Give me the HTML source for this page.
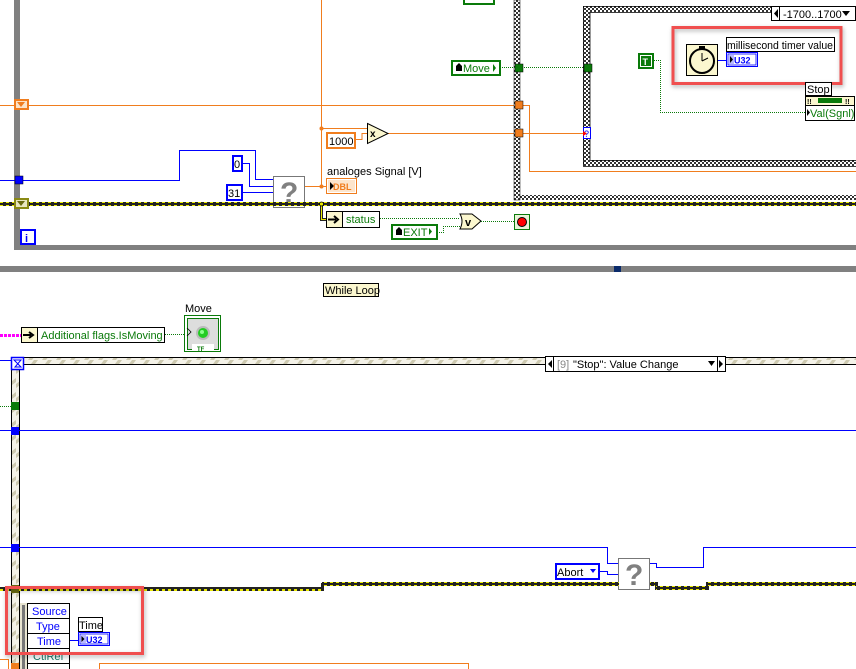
<!DOCTYPE html>
<html><head><meta charset="utf-8"><style>
html,body{margin:0;padding:0;background:#fff;width:856px;height:669px;overflow:hidden}
</style></head><body>
<svg width="856" height="669" viewBox="0 0 856 669" xmlns="http://www.w3.org/2000/svg" font-family="Liberation Sans, sans-serif" font-size="11">
<defs>
<pattern id="chk" width="4" height="4" patternUnits="userSpaceOnUse"><rect width="4" height="4" fill="#fff"/><rect width="2" height="2" fill="#333"/><rect x="2" y="2" width="2" height="2" fill="#333"/></pattern>
<pattern id="err" width="6" height="4" patternUnits="userSpaceOnUse"><rect width="6" height="4" fill="#222"/><rect x="0" y="1" width="3" height="2" fill="#e8e800"/></pattern>
<pattern id="strH" width="14" height="8" patternUnits="userSpaceOnUse"><rect width="14" height="8" fill="#f4f2e8"/><path d="M0 8 L6 0 L10 0 L4 8Z" fill="#cdc9b0"/></pattern>
<pattern id="strV" width="8" height="14" patternUnits="userSpaceOnUse"><rect width="8" height="14" fill="#f4f2e8"/><path d="M0 6 L8 0 L8 4 L0 10Z" fill="#cdc9b0"/></pattern>
<filter id="sh" x="-10%" y="-10%" width="120%" height="130%"><feDropShadow dx="1" dy="2" stdDeviation="2" flood-color="#000" flood-opacity="0.3"/></filter>
</defs>

<rect x="14" y="0" width="6" height="250" fill="#808080"/>
<rect x="14" y="245" width="842" height="5" fill="#808080"/>
<rect x="0" y="266" width="856" height="6" fill="#808080"/>
<rect x="614" y="266" width="7" height="6" fill="#0a2a6a"/>

<line x1="0" y1="105.5" x2="515" y2="105.5" stroke="#f07d1e" stroke-width="1"/>
<line x1="321.5" y1="0" x2="321.5" y2="187" stroke="#f07d1e"/>
<path d="M321 128.5 H367" stroke="#f07d1e" fill="none"/>
<path d="M356 139.5 H362 V133.5 H367" stroke="#f07d1e" fill="none"/>
<path d="M388 133.5 H515" stroke="#f07d1e" fill="none"/>
<circle cx="321.5" cy="128.5" r="2" fill="#f07d1e"/>
<path d="M304 186.5 H326" stroke="#f07d1e" fill="none"/>
<circle cx="321.5" cy="186.5" r="2" fill="#f07d1e"/>
<path d="M520 105.5 H529.5 V171.5 H856" stroke="#f07d1e" fill="none"/>
<path d="M520 133.5 H584" stroke="#f07d1e" fill="none"/>

<rect x="14" y="99" width="15" height="11" fill="#f07d1e"/>
<rect x="16" y="101" width="11" height="7" fill="#fbe3c8"/>
<path d="M17 102 H25 L21 107Z" fill="#f07d1e"/>

<path d="M367.5 123.5 L388 133.5 L367.5 143.5Z" fill="#fbf7cf" stroke="#000"/>
<text x="370" y="137" font-size="10" font-weight="bold">x</text>
<rect x="327" y="133" width="28" height="15" fill="#fff" stroke="#f07d1e" stroke-width="2"/>
<text x="329" y="145">1000</text>

<path d="M0 180.5 H179.5 V150.5 H255.5 V179.5 H273" stroke="#0000ff" fill="none"/>
<path d="M242 163.5 H249.5 V186.5 H273" stroke="#0000ff" fill="none"/>
<path d="M242 192.5 H273" stroke="#0000ff" fill="none"/>
<rect x="15" y="176" width="8" height="8" fill="#0000ff" stroke="#000" stroke-width="0.5"/>
<rect x="233" y="156" width="9" height="15" fill="#fff" stroke="#0000ff" stroke-width="2"/>
<text x="234" y="168">0</text>
<rect x="227" y="185" width="15" height="15" fill="#fff" stroke="#0000ff" stroke-width="2"/>
<text x="228" y="197">31</text>

<rect x="273.5" y="176.5" width="31" height="31" fill="#fff" stroke="#777"/>
<text x="280" y="203" font-size="30" font-weight="bold" fill="#808080">?</text>

<text x="327" y="175">analoges Signal [V]</text>
<rect x="326.5" y="178.5" width="30" height="15" fill="#fff" stroke="#f07d1e"/>
<rect x="328" y="180" width="27" height="12" fill="#fde5cc"/>
<path d="M330 182 L334 186 L330 190Z" fill="#000"/>
<text x="333" y="190" font-size="9" font-weight="bold" fill="#f07d1e">DBL</text>

<rect x="0" y="202" width="856" height="4" fill="url(#err)"/>
<rect x="14" y="198" width="15" height="11" fill="#8a8a14"/>
<rect x="16" y="200" width="11" height="7" fill="#e8e6c0"/>
<path d="M17 201 H25 L21 206Z" fill="#6a6a10"/>
<path d="M321.5 204 V219.5 H327" stroke="#222" stroke-width="3" fill="none"/>
<path d="M321.5 204 V219.5 H327" stroke="#e8e800" stroke-width="1" fill="none"/>
<circle cx="321.5" cy="204" r="2" fill="#e8e800" stroke="#000" stroke-width="0.8"/>

<rect x="326.5" y="211.5" width="16" height="16" fill="#fbf7cf" stroke="#000"/>
<path d="M328 219.5 H336 M334 216 L338 219.5 L334 223" stroke="#000" stroke-width="2" fill="none"/>
<rect x="342.5" y="211.5" width="37" height="16" fill="#fff" stroke="#000"/>
<text x="346" y="223" fill="#0a7a0a">status</text>
<path d="M380 218.5 H460" stroke="#0a7a0a" stroke-dasharray="1,1" fill="none"/>
<rect x="392" y="225" width="45" height="14" fill="#fff" stroke="#0a7a0a" stroke-width="2"/>
<path d="M396 230 L399 227 L402 230 V235 H396Z" fill="#000"/>
<text x="403" y="236" fill="#0a7a0a">EXIT</text>
<path d="M429 228 L432 231.5 L429 235Z" fill="#0a7a0a"/>
<path d="M437 232.5 H443.5 V226.5 H462" stroke="#0a7a0a" stroke-dasharray="1,1" fill="none"/>
<path d="M460 214 H472 L481 221 L472 229 H460 Q464 221 460 214Z" fill="#fbf7cf" stroke="#000"/>
<text x="465" y="226" font-size="11" font-weight="bold">v</text>
<path d="M481 221.5 H514" stroke="#0a7a0a" stroke-dasharray="1,1" fill="none"/>
<rect x="514.5" y="214.5" width="15" height="15" fill="#e9f3d8" stroke="#0a7a0a"/>
<circle cx="522" cy="222" r="4.5" fill="#ff0000" stroke="#000" stroke-width="1"/>

<rect x="21" y="230" width="14" height="14" fill="#fff" stroke="#0000ff" stroke-width="2"/>
<text x="25" y="242" fill="#0000ff" font-weight="bold">i</text>

<rect x="514" y="0" width="6" height="200" fill="url(#chk)"/>
<rect x="514" y="195" width="342" height="5" fill="url(#chk)"/>
<rect x="514" y="0" width="6" height="200" fill="none" stroke="#000" stroke-width="0.5"/>
<rect x="464" y="-2" width="30" height="6" fill="#fff" stroke="#0a7a0a" stroke-width="2"/>

<rect x="452" y="61" width="48" height="14" fill="#fff" stroke="#0a7a0a" stroke-width="2"/>
<path d="M456 66 L459 63 L462 66 V71 H456Z" fill="#000"/>
<text x="463" y="72" fill="#0a7a0a">Move</text>
<path d="M493 64 L496 68 L493 72Z" fill="#0a7a0a"/>
<path d="M500 67.5 H584" stroke="#0a7a0a" stroke-dasharray="1,1" fill="none"/>
<rect x="515" y="64" width="8" height="8" fill="#0a7a0a" stroke="#000" stroke-width="0.5"/>
<rect x="515" y="101" width="8" height="8" fill="#f07d1e" stroke="#000" stroke-width="0.5"/>
<rect x="515" y="129" width="8" height="8" fill="#f07d1e" stroke="#000" stroke-width="0.5"/>

<rect x="583" y="6" width="7" height="160" fill="url(#chk)"/>
<rect x="583" y="6" width="273" height="6" fill="url(#chk)"/>
<rect x="583" y="160" width="273" height="6" fill="url(#chk)"/>
<path d="M583.5 166 V6.5 H856 M590 160 V12.5 H856 M590 160.5 H856 M583 166.5 H856" stroke="#000" fill="none" stroke-width="0.8"/>
<rect x="584" y="64" width="8" height="8" fill="#0a7a0a" stroke="#000" stroke-width="0.5"/>
<rect x="583.5" y="127.5" width="7" height="11" fill="#fff" stroke="#0000ff"/>
<text x="584" y="137" font-size="9" fill="#0000ff">?</text>
<path d="M583 131 L587 133.5 L583 136Z" fill="#ff0000"/>
<rect x="771.5" y="6.5" width="84" height="14" fill="#fff" stroke="#000"/>
<line x1="779.5" y1="6.5" x2="779.5" y2="20.5" stroke="#000"/>
<path d="M778 9 L774 13.5 L778 18Z" fill="#000"/>
<text x="783" y="18">-1700..1700</text>
<path d="M842 11 H850 L846 16Z" fill="#000"/>

<rect x="639" y="54" width="14" height="14" fill="#fff" stroke="#0a7a0a" stroke-width="2"/>
<rect x="641" y="56" width="10" height="10" fill="#0a7a0a"/>
<text x="642.5" y="65" font-size="9" font-weight="bold" fill="#fff">T</text>
<path d="M654 60.5 H660.5 V112.5 H806" stroke="#0a7a0a" stroke-dasharray="1,1" fill="none"/>

<rect x="673" y="27.5" width="168" height="56" fill="none" stroke="#f05050" stroke-width="3" filter="url(#sh)"/>
<rect x="686.5" y="44.5" width="31" height="31" fill="#fbf7cf" stroke="#000"/>
<circle cx="702" cy="61" r="12" fill="#fbf7cf" stroke="#000" stroke-width="2"/>
<rect x="699" y="46" width="6" height="3" fill="#000"/>
<path d="M702 61 V53 M702 61 L708 58" stroke="#000" stroke-width="1" fill="none"/>
<path d="M718 60.5 H727" stroke="#0000ff" fill="none"/>
<rect x="726.5" y="37.5" width="108" height="14" fill="#fff" stroke="#000"/>
<text x="727" y="49" textLength="106" lengthAdjust="spacingAndGlyphs">millisecond timer value</text>
<rect x="726.5" y="52.5" width="31" height="14" fill="#fff" stroke="#0000ff"/>
<rect x="728" y="54" width="28" height="11" fill="#fff" stroke="#0000ff" stroke-width="0.8"/>
<rect x="729" y="55" width="5" height="9" fill="#b8b8ff"/>
<path d="M730 56 L733 59.5 L730 63Z" fill="#000"/>
<text x="734" y="63.5" font-size="9" font-weight="bold" fill="#0000ff">U32</text>

<rect x="805.5" y="82.5" width="26" height="13" fill="#fff" stroke="#000"/>
<text x="807" y="93">Stop</text>
<rect x="805.5" y="96.5" width="49" height="24" fill="#fff" stroke="#000"/>
<rect x="806" y="97" width="48" height="8" fill="#fbf7cf"/>
<rect x="818" y="98" width="24" height="5" fill="#0a7a0a"/>
<text x="807" y="104" font-size="7" font-weight="bold">!!</text>
<text x="845" y="104" font-size="7" font-weight="bold">!!</text>
<line x1="806" y1="105.5" x2="854" y2="105.5" stroke="#000"/>
<path d="M807 109 L810 112.5 L807 116Z" fill="#000"/>
<text x="810" y="117" fill="#0a7a0a">Val(Sgnl)</text>

<rect x="323.5" y="283.5" width="55" height="13" fill="#fbf7cf" stroke="#000"/>
<text x="325" y="294">While Loop</text>

<text x="185" y="312">Move</text>
<rect x="184.5" y="315.5" width="36" height="36" fill="#fff" stroke="#0a7a0a"/>
<rect x="187.5" y="318.5" width="31" height="31" fill="#ddd" stroke="#0a7a0a"/>
<circle cx="203" cy="333" r="7" fill="#bbb"/>
<circle cx="203" cy="333" r="5" fill="#22cc22"/>
<circle cx="202" cy="332" r="2" fill="#88ff88"/>
<rect x="192" y="344" width="22" height="6" fill="#fff"/>
<text x="197" y="351" font-size="6" fill="#0a7a0a" font-weight="bold">TF</text>
<path d="M187 328 L191 332 L187 336" stroke="#000" fill="none" stroke-width="0.8"/>

<path d="M0 335.5 H21" stroke="#ff00ff" stroke-width="3" stroke-dasharray="3,1" fill="none"/>
<rect x="21.5" y="327.5" width="16" height="15" fill="#fbf7cf" stroke="#000"/>
<path d="M23 335 H31 M29 332 L33 335 L29 338" stroke="#000" stroke-width="2" fill="none"/>
<rect x="37.5" y="327.5" width="127" height="15" fill="#fff" stroke="#000"/>
<text x="41" y="339" fill="#0a7a0a">Additional flags.IsMoving</text>
<path d="M165 334.5 H184" stroke="#0a7a0a" stroke-dasharray="1,1" fill="none"/>

<rect x="11" y="357" width="845" height="8" fill="url(#strH)"/>
<path d="M11 357.5 H856 M19 364.5 H856" stroke="#000" fill="none"/>
<rect x="11" y="365" width="8" height="304" fill="url(#strV)"/>
<path d="M11.5 357 V669 M19.5 365 V669" stroke="#000" fill="none"/>
<path d="M0 360.5 H11" stroke="#0000ff" fill="none"/>
<rect x="11.5" y="357.5" width="12" height="12" fill="#fff" stroke="#0000ff" stroke-width="1.5"/>
<path d="M14 360 H21 L15 367 H21Z" stroke="#0000ff" fill="none"/>
<rect x="545.5" y="356.5" width="180" height="15" fill="#fff" stroke="#000"/>
<line x1="553.5" y1="356.5" x2="553.5" y2="371.5" stroke="#000"/>
<line x1="717.5" y1="356.5" x2="717.5" y2="371.5" stroke="#000"/>
<path d="M552 360 L548 364 L552 368Z M719 360 L723 364 L719 368Z" fill="#000"/>
<text x="557" y="368" fill="#888">[9]</text>
<text x="573" y="368">"Stop": Value Change</text>
<path d="M708 361 H715 L711.5 366Z" fill="#000"/>

<path d="M0 406.5 H11" stroke="#0a7a0a" stroke-dasharray="1,1" fill="none"/>
<rect x="11" y="402" width="8" height="8" fill="#0a7a0a"/>
<line x1="0" y1="430.5" x2="856" y2="430.5" stroke="#0000ff"/>
<rect x="11" y="427" width="8" height="8" fill="#0000ff"/>
<path d="M0 547.5 H607.5 V563.5 H619" stroke="#0000ff" fill="none"/>
<rect x="11" y="544" width="8" height="8" fill="#0000ff"/>
<path d="M599 571.5 H607.5 V574.5 H619" stroke="#0000ff" fill="none"/>
<path d="M650 563.5 H656.5 V567.5 H703.5 V547.5 H856" stroke="#0000ff" fill="none"/>
<rect x="556" y="564" width="43" height="15" fill="#fff" stroke="#0000ff" stroke-width="2"/>
<text x="557" y="576">Abort</text>
<path d="M590 569 H596 L593 573Z" fill="#0000ff"/>
<rect x="618.5" y="558.5" width="31" height="31" fill="#fff" stroke="#777"/>
<text x="625" y="585" font-size="30" font-weight="bold" fill="#808080">?</text>

<rect x="0" y="587" width="323" height="4" fill="url(#err)"/>
<rect x="321" y="583" width="3" height="8" fill="#222"/>
<rect x="322" y="582" width="297" height="4" fill="url(#err)"/>
<rect x="650" y="582" width="7" height="4" fill="url(#err)"/>
<rect x="655" y="582" width="3" height="8" fill="#222"/>
<rect x="656" y="586" width="53" height="4" fill="url(#err)"/>
<rect x="706" y="582" width="3" height="8" fill="#222"/>
<rect x="707" y="582" width="149" height="4" fill="url(#err)"/>
<rect x="11" y="585" width="8" height="8" fill="#6a6a10"/>

<path d="M0 659.5 H8.5 V669" stroke="#f07d1e" fill="none"/>
<rect x="11" y="663" width="8" height="6" fill="#f07d1e"/>
<path d="M99.5 669 V663.5 H468.5 V669" stroke="#f07d1e" fill="none"/>

<rect x="20" y="603" width="8" height="66" fill="#e8e4d0"/>
<rect x="22" y="605" width="3" height="64" fill="#777"/>
<rect x="27.5" y="603.5" width="42" height="15" fill="#fff" stroke="#000"/>
<rect x="27.5" y="618.5" width="42" height="15" fill="#fff" stroke="#000"/>
<rect x="27.5" y="633.5" width="42" height="15" fill="#fff" stroke="#000"/>
<rect x="27.5" y="648.5" width="42" height="15" fill="#fff" stroke="#000"/>
<rect x="27.5" y="663.5" width="42" height="10" fill="#fff" stroke="#000"/>
<text x="32" y="615" fill="#0000ff">Source</text>
<text x="36" y="630" fill="#0000ff">Type</text>
<text x="37" y="645" fill="#0000ff">Time</text>
<text x="33" y="660" fill="#1a7a6a">CtlRef</text>
<path d="M70 640.5 H79" stroke="#0000ff" fill="none"/>
<rect x="78.5" y="617.5" width="24" height="14" fill="#fff" stroke="#000"/>
<text x="79" y="629">Time</text>
<rect x="78.5" y="632.5" width="31" height="13" fill="#fff" stroke="#0000ff"/>
<rect x="80" y="634" width="28" height="10" fill="#fff" stroke="#0000ff" stroke-width="0.8"/>
<rect x="81" y="635" width="5" height="8" fill="#b8b8ff"/>
<path d="M81.5 636 L84.5 639 L81.5 642Z" fill="#000"/>
<text x="86" y="643" font-size="9" font-weight="bold" fill="#0000ff">U32</text>
<rect x="6.5" y="587.5" width="136" height="66" fill="none" stroke="#f05050" stroke-width="3" filter="url(#sh)"/>
</svg>
</body></html>
